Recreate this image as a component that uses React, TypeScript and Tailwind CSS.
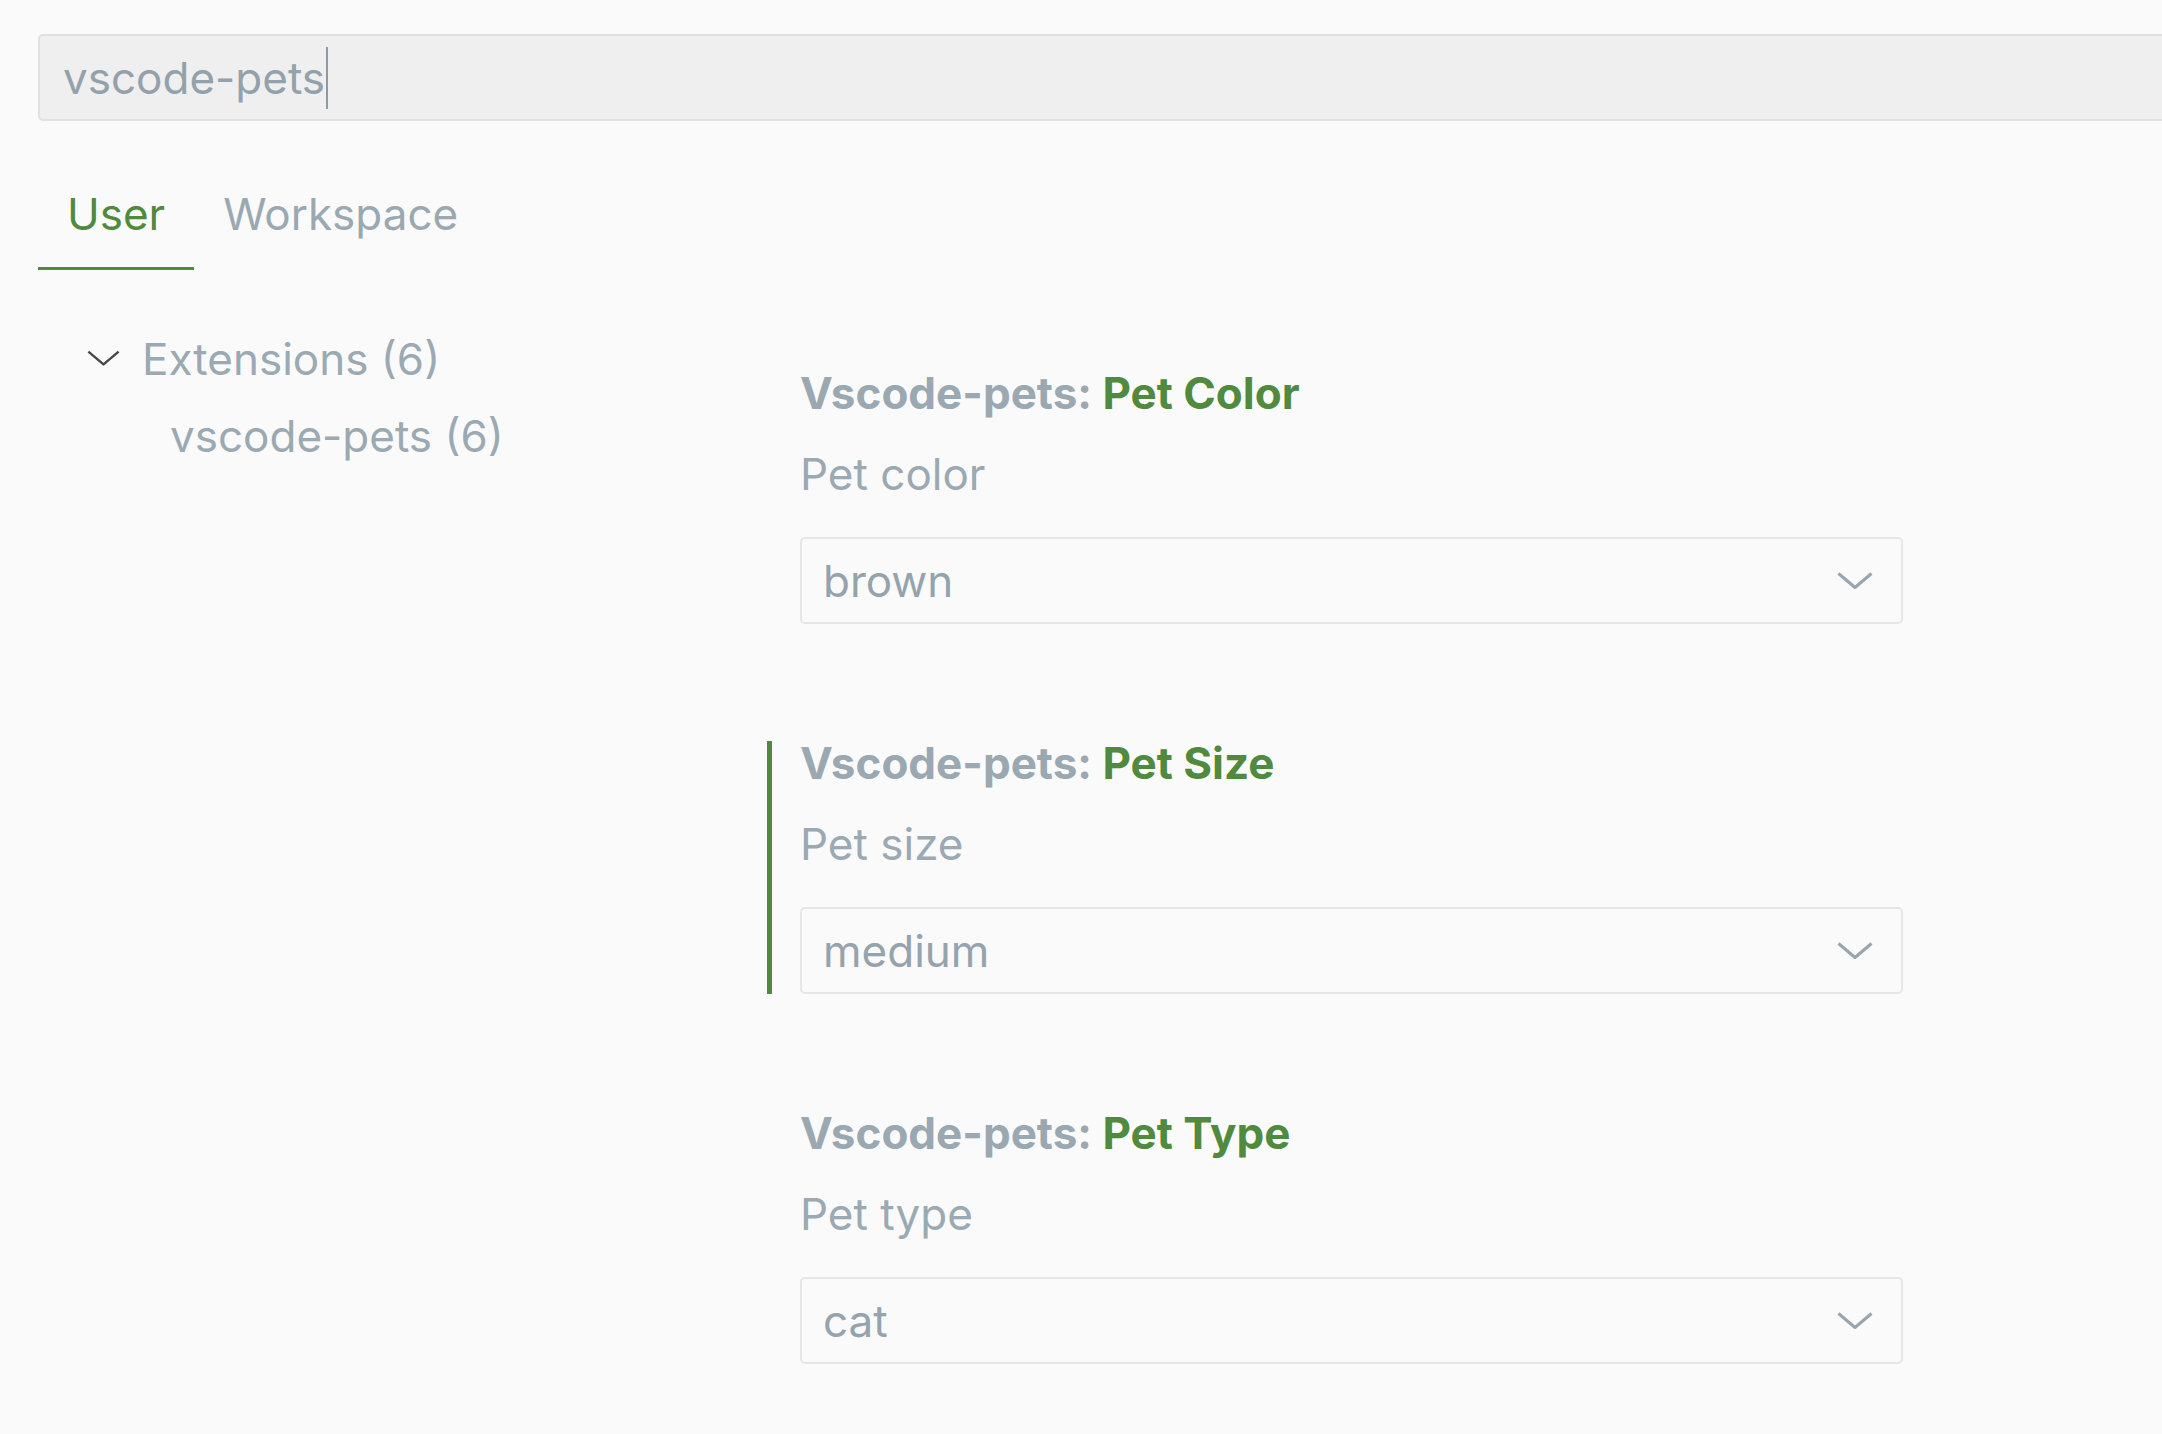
import React from "react";

type Setting = {
  title: string;
  description: string;
  value: string;
  focused?: boolean;
};

const settings: Setting[] = [
  { title: "Pet Color", description: "Pet color", value: "brown" },
  { title: "Pet Size", description: "Pet size", value: "medium", focused: true },
  { title: "Pet Type", description: "Pet type", value: "cat" },
];

function Chevron({ className, width = 2.6 }: { className?: string; width?: number }) {
  return (
    <svg viewBox="0 0 36 18" className={className} fill="none">
      <polyline points="1.5,1.5 18,15.5 34.5,1.5" stroke="currentColor" strokeWidth={width} strokeLinejoin="round" />
    </svg>
  );
}

function SettingItem({ setting }: { setting: Setting }) {
  return (
    <div
      className={`border-l-[5px] pl-[28px] ${setting.focused ? "border-[#4f8a3e]" : "border-transparent"}`}
    >
      <div className="h-[44px] leading-[44px] font-bold whitespace-nowrap">
        <span className="text-[#9aa8b2]">Vscode-pets: </span>
        <span className="text-[#4f8a3e]">{setting.title}</span>
      </div>
      <div className="mt-[37px] h-[44px] leading-[44px] text-[#9ba9b3]">{setting.description}</div>
      <div className="mt-[41px] flex h-[87px] w-[1103px] items-center justify-between rounded-[5px] border-2 border-[#e6e6e6] pl-[21px] pr-[28px]">
        <span className="text-[#95a3ad]">{setting.value}</span>
        <Chevron className="h-[18px] w-[36px] text-[#97a5af]" width={3} />
      </div>
    </div>
  );
}

export default function App() {
  return (
    <div className="min-h-screen overflow-hidden bg-[#fafafa] pl-[38px] pt-[34px] font-['Inter',sans-serif] text-[44px]">
      <div className="-mr-[10px] flex h-[87px] items-center rounded-l-[5px] border-2 border-[#e1e1e1] bg-[#efefef] pl-[23px]">
        <span className="text-[#93a1ab]">vscode-pets</span>
        <span className="ml-[1px] h-[62px] w-[2px] bg-[#8c9aa4]" />
      </div>

      <div className="mt-[65px] flex">
        <div className="border-b-[3px] border-[#4f8a3e] px-[29px] pb-[25px] leading-[56px] text-[#4f8a3e]">User</div>
        <div className="border-b-[3px] border-transparent px-[29px] pb-[25px] leading-[56px] text-[#9aa8b2]">Workspace</div>
      </div>

      <div className="flex">
        <div className="mt-[50px] w-[729px] shrink-0">
          <div className="flex h-[77px] items-center pl-[49px]">
            <Chevron className="h-[17px] w-[33px] text-[#474747]" />
            <span className="ml-[22px] text-[#9ba9b3]">Extensions (6)</span>
          </div>
          <div className="flex h-[77px] items-center pl-[132px] text-[#9ba9b3]">vscode-pets (6)</div>
        </div>
        <div className="mt-[101px] flex flex-col gap-[117px]">
          {settings.map((s) => (
            <SettingItem key={s.title} setting={s} />
          ))}
        </div>
      </div>
    </div>
  );
}
